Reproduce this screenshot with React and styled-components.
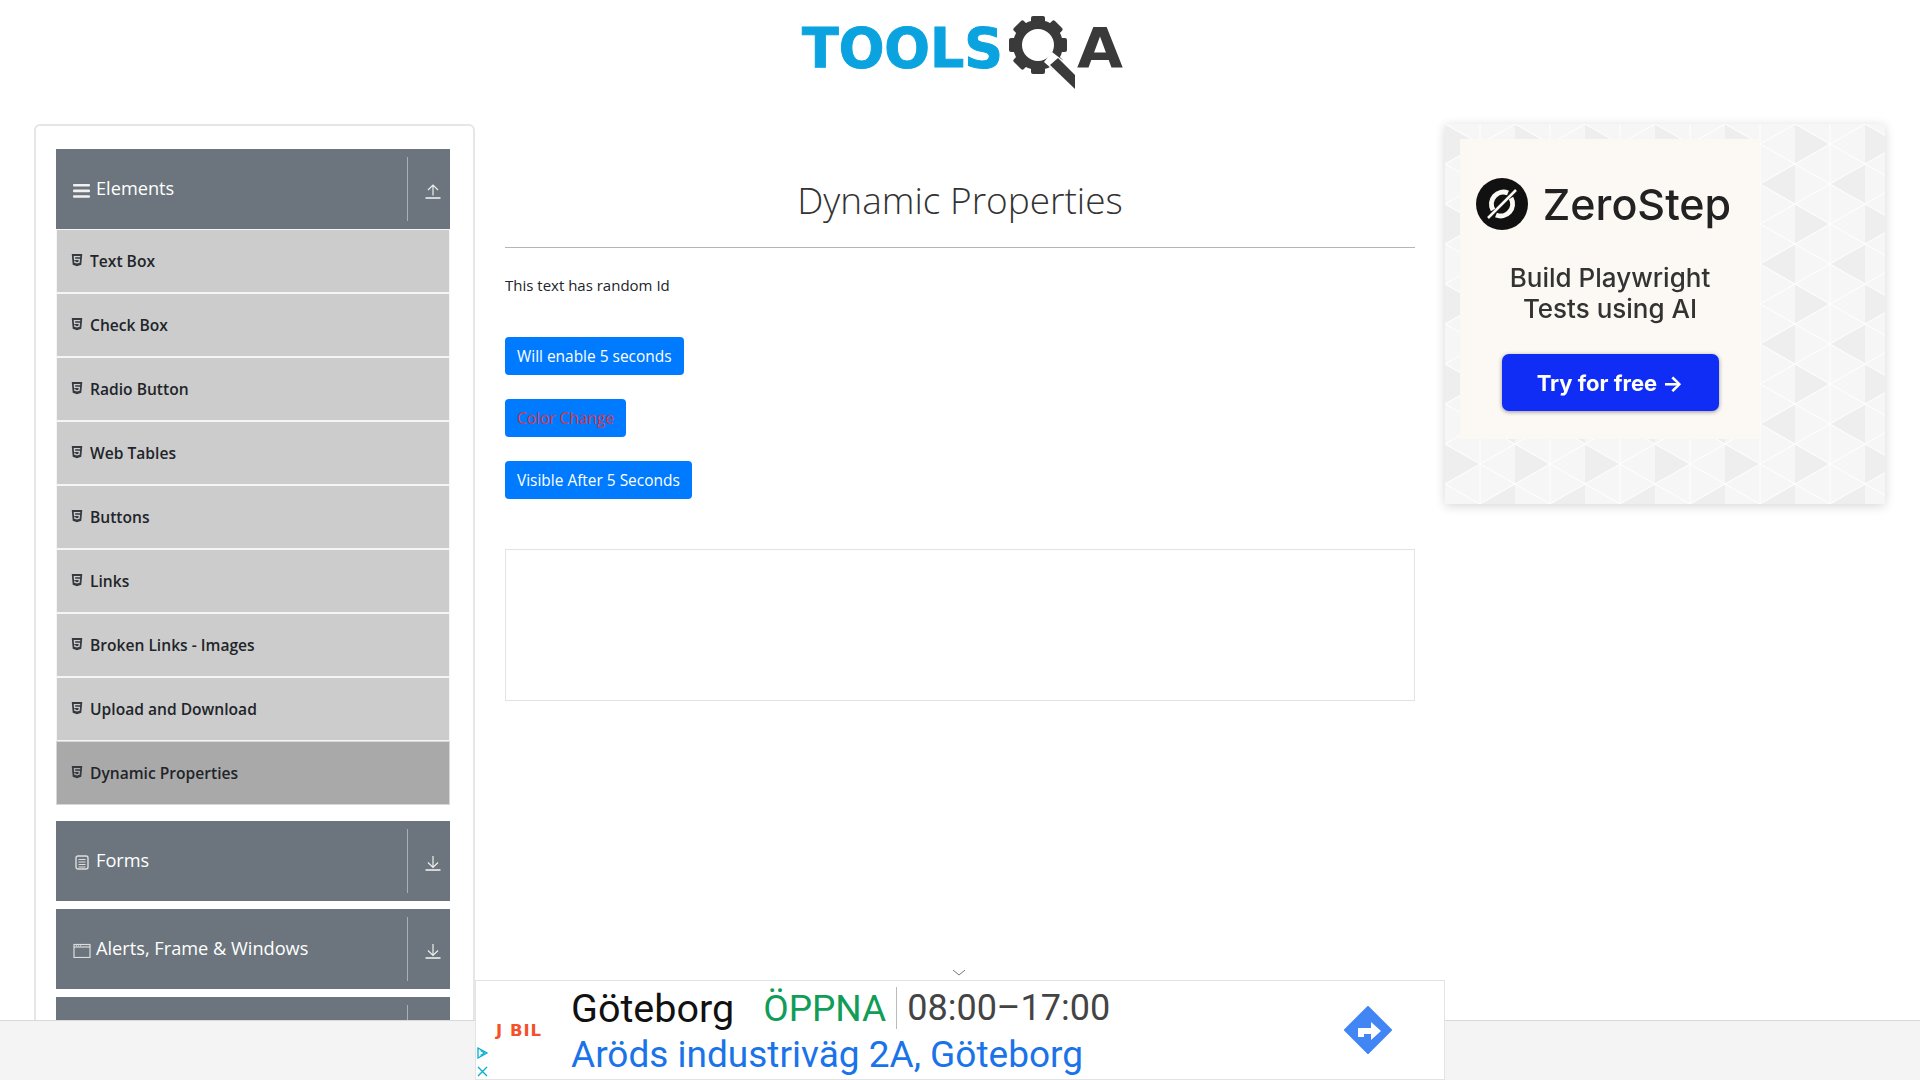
import styled, { createGlobalStyle } from "styled-components";
import { FaHtml5 } from "react-icons/fa";

const GlobalStyle = createGlobalStyle`
  html, body {
    margin: 0;
    background: #fff;
    overflow: hidden;
  }
  * { box-sizing: border-box; }
`;

const UI_FONT = `"Open Sans", "Noto Sans", sans-serif`;
const AD_FONT = `Roboto, "Liberation Sans", sans-serif`;

const Page = styled.div`
  height: 1080px;
  overflow: hidden;
  font-family: ${UI_FONT};
  color: #212529;
`;

const Header = styled.header`
  height: 124px;
  display: flex;
  justify-content: center;
`;

const Body = styled.div`
  display: flex;
  align-items: flex-start;
  padding-left: 34px;
`;

const Sidebar = styled.aside`
  width: 441px;
  height: 1000px;
  flex: none;
  padding: 23px 23px 0 20px;
  border: 2px solid #e6e6e6;
  border-radius: 6px;
`;

const Group = styled.section`
  margin-bottom: 8px;
`;

const GroupHeader = styled.div`
  height: 80px;
  display: flex;
  align-items: center;
  background: #6c757d;
  color: #fff;
  font-size: 18.2px;
  padding: 8px 0 8px 17px;
`;

const GroupIcon = styled.span`
  width: 18px;
  height: 16px;
  margin-right: 5px;
  margin-top: 3px;
  display: flex;
  align-items: center;
  justify-content: center;
`;

const GroupTitle = styled.span`
  flex: 1;
  margin-top: -3px;
`;

const Toggle = styled.span`
  width: 43px;
  height: 64px;
  flex: none;
  border-left: 1px solid #a9afb4;
  display: flex;
  align-items: center;
  justify-content: center;
  padding: 3px 0 0 7px;
`;

const MenuList = styled.ul`
  list-style: none;
  margin: 0 0 16px;
  padding: 0;
`;

const MenuItem = styled.li`
  height: 64px;
  display: flex;
  align-items: center;
  gap: 7px;
  padding: 0 0 0 14px;
  font-size: 15.6px;
  font-weight: 600;
  background: ${(p) => (p.$active ? "#a9a9a9" : "#ccc")};
  border: 1px solid ${(p) => (p.$active ? "#d4d8dc" : "#f5f5f5")};
  svg {
    width: 12px;
    height: 14px;
    margin-top: -3px;
    color: #343a40;
  }
`;

const Main = styled.main`
  width: 970px;
  flex: none;
  padding: 0 30px;
`;

const Title = styled.h1`
  margin: 0;
  height: 124px;
  padding-top: 51px;
  border-bottom: 1px solid #b5b5b5;
  font-size: 37px;
  font-weight: 300;
  line-height: 50px;
  text-align: center;
  color: #333;
`;

const Note = styled.p`
  margin: 27px 0 0;
  font-size: 15px;
  line-height: 21px;
`;

const ButtonStack = styled.div`
  margin-top: 41px;
  display: flex;
  flex-direction: column;
  align-items: flex-start;
  gap: 24px;
`;

const Button = styled.button`
  height: 38px;
  padding: 0 12px;
  border: 0;
  border-radius: 4px;
  background: #007bff;
  color: ${(p) => (p.$alert ? "#dc3545" : "#fff")};
  font-family: ${UI_FONT};
  font-size: 15.45px;
`;

const AdSlot = styled.div`
  margin-top: 50px;
  height: 152px;
  border: 1px solid #e3e3e3;
`;

const SideAd = styled.aside`
  position: relative;
  width: 440px;
  height: 380px;
  flex: none;
  padding: 15px;
  overflow: hidden;
  box-shadow: 0 2px 10px rgba(0, 0, 0, 0.16);
  background: #f6f6f6;
`;

const AdPattern = styled.svg`
  position: absolute;
  inset: 0;
  width: 100%;
  height: 100%;
`;

const AdCard = styled.div`
  position: relative;
  width: 300px;
  height: 300px;
  background: #fcf8f3;
  font-family: Inter, sans-serif;
  color: #222;
  display: flex;
  flex-direction: column;
  align-items: center;
  padding-top: 36px;
  filter: blur(0.5px);
`;

const Brand = styled.div`
  display: flex;
  align-items: center;
  gap: 14px;
  margin-right: 14px;
  font-size: 43px;
  font-weight: 500;
  line-height: 58px;
`;

const Tagline = styled.div`
  margin-top: 29px;
  font-size: 26px;
  font-weight: 500;
  line-height: 31px;
  color: #333;
  text-align: center;
`;

const Cta = styled.div`
  margin-top: 30px;
  width: 217px;
  height: 57px;
  border-radius: 7px;
  background: #0f2df5;
  color: #fff;
  font-size: 22px;
  font-weight: 700;
  display: flex;
  align-items: center;
  justify-content: center;
  box-shadow: 0 1px 4px rgba(0, 0, 0, 0.4);
`;

const Footer = styled.div`
  position: fixed;
  left: 0;
  right: 0;
  bottom: 0;
  height: 60px;
  background: #f4f4f4;
  border-top: 1px solid #d9d9d9;
`;

const Chevron = styled.svg`
  position: fixed;
  left: 952px;
  bottom: 103px;
`;

const BottomAd = styled.div`
  position: fixed;
  left: 475px;
  bottom: 0;
  width: 970px;
  height: 100px;
  background: #fff;
  border: 1px solid #e3e3e3;
  font-family: ${AD_FONT};
  display: flex;
  align-items: center;
`;

const AdLogo = styled.div`
  width: 95px;
  flex: none;
  padding-left: 20px;
  color: #f4502a;
  font-family: "DejaVu Sans", sans-serif;
  font-size: 16.5px;
  font-weight: 700;
  letter-spacing: 1px;
  white-space: nowrap;
`;

const AdText = styled.div`
  flex: 1;
  padding-top: 2px;
`;

const AdLine = styled.div`
  display: flex;
  align-items: center;
  height: 46px;
  font-size: 37px;
  white-space: nowrap;
`;

const AdName = styled.span`
  color: #111;
  font-size: 39.5px;
`;

const AdOpen = styled.span`
  margin-left: 29px;
  color: #0f9d58;
`;

const AdHours = styled.span`
  margin-left: 10px;
  padding-left: 10px;
  border-left: 1px solid #bbb;
  color: #444;
  font-size: 36px;
`;

const AdAddress = styled(AdLine)`
  color: #1a73e8;
`;

const AdChoices = styled.svg`
  position: absolute;
  left: 0;
  bottom: -4px;
`;

const Direction = styled.svg`
  margin-right: 52px;
  flex: none;
`;

const MENU = [
  "Text Box",
  "Check Box",
  "Radio Button",
  "Web Tables",
  "Buttons",
  "Links",
  "Broken Links - Images",
  "Upload and Download",
  "Dynamic Properties",
];

const GEAR_TEETH = [0, 45, 90, 135, 180, 225, 270, 315];

const Logo = () => (
  <svg width="400" height="110" viewBox="0 0 400 110">
    <text
      x="42"
      y="67"
      fontFamily="DejaVu Sans"
      fontWeight="700"
      fontSize="55"
      fill="#0ba3df"
      stroke="#0ba3df"
      strokeWidth="1"
      textLength="201"
      lengthAdjust="spacingAndGlyphs"
    >
      TOOLS
    </text>
    <g fill="#3a3a3a">
      {GEAR_TEETH.map((a) => (
        <rect key={a} x="271" y="16" width="14" height="12" rx="2" transform={`rotate(${a} 278 45)`} />
      ))}
      <circle cx="278" cy="45" r="20.5" fill="none" stroke="#3a3a3a" strokeWidth="9" />
      <polygon points="292,52 318,72 318,92 284,62" fill="#fff" />
      <polygon points="298,58 315,75 315,89 290,65" />
    </g>
    <text
      x="317"
      y="67"
      fontFamily="DejaVu Sans"
      fontWeight="700"
      fontSize="55"
      fill="#3a3a3a"
      textLength="46"
      lengthAdjust="spacingAndGlyphs"
    >
      A
    </text>
  </svg>
);

const BarsIcon = () => (
  <svg width="18" height="16" viewBox="0 0 18 16" fill="#f1f1f1">
    <rect y="1" width="17" height="2.6" rx="1" />
    <rect y="6.6" width="17" height="2.6" rx="1" />
    <rect y="12.2" width="17" height="2.6" rx="1" />
  </svg>
);

const FormIcon = () => (
  <svg width="14" height="15" viewBox="0 0 14 15" fill="none" stroke="#ddd">
    <rect x="1" y="1" width="12" height="13" rx="2" strokeWidth="1.4" />
    <path d="M3.5 4.5h7M3.5 7h7M3.5 9.5h7M3.5 12h7" strokeWidth="1" />
  </svg>
);

const WindowIcon = () => (
  <svg width="18" height="15" viewBox="0 0 18 15" fill="none" stroke="#ddd">
    <rect x="1" y="1.5" width="16" height="13" strokeWidth="1.2" />
    <path d="M1 4h16" strokeWidth="1.2" />
    <path d="M3 2.8h1M5 2.8h1M7 2.8h1" strokeWidth="1" />
  </svg>
);

const ArrowIcon = ({ up }) => (
  <svg width="16" height="16" viewBox="0 0 16 16" fill="none" stroke="#eee" strokeWidth="1.2">
    <path d="M0.5 15h15" strokeWidth="1.6" />
    {up ? <path d="M8 12.5V2M3 7l5-5 5 5" /> : <path d="M8 1v11M3 7.5l5 5 5-5" />}
  </svg>
);

const GroupBar = ({ icon, title, up }) => (
  <GroupHeader>
    <GroupIcon>{icon}</GroupIcon>
    <GroupTitle>{title}</GroupTitle>
    <Toggle>
      <ArrowIcon up={up} />
    </Toggle>
  </GroupHeader>
);

const ZeroStepMark = () => (
  <svg width="54" height="54" viewBox="0 0 54 54">
    <circle cx="27" cy="27" r="26" fill="#111" />
    <path
      d="M18 33a12 12 0 0 1 15-17M36 21a12 12 0 0 1-15 17"
      fill="none"
      stroke="#fcf8f3"
      strokeWidth="5"
    />
    <path d="M13 41L41 13" stroke="#fcf8f3" strokeWidth="2.5" />
  </svg>
);

export default function App() {
  return (
    <Page>
      <GlobalStyle />
      <Header>
        <Logo />
      </Header>
      <Body>
        <Sidebar>
          <Group>
            <GroupBar icon={<BarsIcon />} title="Elements" up />
            <MenuList>
              {MENU.map((item) => (
                <MenuItem key={item} $active={item === "Dynamic Properties"}>
                  <FaHtml5 />
                  {item}
                </MenuItem>
              ))}
            </MenuList>
          </Group>
          <Group>
            <GroupBar icon={<FormIcon />} title="Forms" />
          </Group>
          <Group>
            <GroupBar icon={<WindowIcon />} title="Alerts, Frame & Windows" />
          </Group>
          <Group>
            <GroupBar icon={<BarsIcon />} title="Widgets" />
          </Group>
        </Sidebar>
        <Main>
          <Title>Dynamic Properties</Title>
          <Note>This text has random Id</Note>
          <ButtonStack>
            <Button>Will enable 5 seconds</Button>
            <Button $alert>Color Change</Button>
            <Button>Visible After 5 Seconds</Button>
          </ButtonStack>
          <AdSlot />
        </Main>
        <SideAd>
          <AdPattern>
            <defs>
              <pattern id="tri" width="70" height="80" patternUnits="userSpaceOnUse">
                <path d="M0 0L35 20L0 40ZM35 60L70 40L70 80Z" fill="#eeeeee" />
                <path
                  d="M0 0L70 40M70 0L0 40M0 40L70 80M70 40L0 80M35 0V80"
                  stroke="#fff"
                  strokeWidth="1"
                  fill="none"
                />
              </pattern>
            </defs>
            <rect width="100%" height="100%" fill="url(#tri)" />
          </AdPattern>
          <AdCard>
            <Brand>
              <ZeroStepMark />
              ZeroStep
            </Brand>
            <Tagline>
              Build Playwright
              <br />
              Tests using AI
            </Tagline>
            <Cta>Try for free →</Cta>
          </AdCard>
        </SideAd>
      </Body>
      <Footer />
      <Chevron width="14" height="8" viewBox="0 0 14 8" fill="none" stroke="#777">
        <path d="M1 1l6 5 6-5" />
      </Chevron>
      <BottomAd>
        <AdLogo>J BIL</AdLogo>
        <AdText>
          <AdLine>
            <AdName>Göteborg</AdName>
            <AdOpen>ÖPPNA</AdOpen>
            <AdHours>08:00–17:00</AdHours>
          </AdLine>
          <AdAddress>Aröds industriväg 2A, Göteborg</AdAddress>
        </AdText>
        <Direction width="48" height="48" viewBox="0 0 48 48">
          <path d="M24 1L47 24L24 47L1 24Z" fill="#4285f4" stroke="#4285f4" strokeLinejoin="round" strokeWidth="2" />
          <path d="M14 31V22h13v-6l10 9-10 9v-6h-7v3Z" fill="#fff" />
        </Direction>
        <AdChoices width="14" height="38" viewBox="0 0 14 38" fill="none" stroke="#00aecd" strokeWidth="1.3">
          <path d="M2 3l9 5-9 5Z" />
          <path d="M4.5 5.5l4 2.5-4 2.5" />
          <path d="M2 22l9 9M11 22l-9 9" />
        </AdChoices>
      </BottomAd>
    </Page>
  );
}
